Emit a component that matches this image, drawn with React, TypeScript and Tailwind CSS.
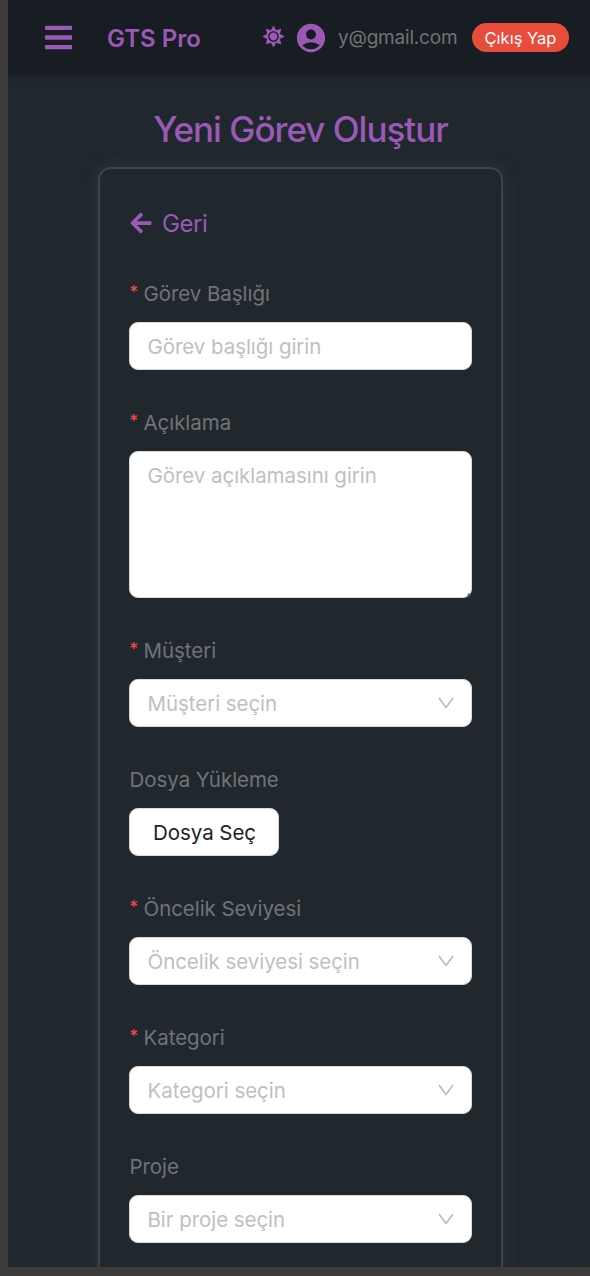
import type { ReactNode } from "react";
import { FaArrowLeft, FaBars, FaSun } from "react-icons/fa";
import { MdAccountCircle } from "react-icons/md";

function Field({ label, required, children }: { label: string; required?: boolean; children: ReactNode }) {
  return (
    <div className="mb-9">
      <div className="mb-3 flex h-[33px] items-center pt-[2px] pl-[0.5px] text-[20.5px] font-[370] tracking-[-0.05px] text-[#717375]">
        {required && <span className="mr-[7px] mb-[5px] w-[7px] text-[17px] leading-none text-[#ff4d4f]">*</span>}
        <span>{label}</span>
      </div>
      {children}
    </div>
  );
}

const box = "w-full rounded-[9px] border-[1.5px] border-[#d9d9d9] bg-white text-[20.5px] font-[370] tracking-[-0.05px]";

function Select({ placeholder }: { placeholder: string }) {
  return (
    <button className={`${box} flex h-12 items-center justify-between pt-[2px] pr-[17px] pl-[17.5px] text-[#bfbfbf]`}>
      <span>{placeholder}</span>
      <svg viewBox="0 0 16 12" className="mb-[3px] h-3 w-4" fill="none" stroke="#b8b8b8" strokeWidth="1.5">
        <path d="M1 1 L8 10.5 L15 1" />
      </svg>
    </button>
  );
}

export default function App() {
  return (
    <div className="h-[1276px] w-[590px] overflow-hidden bg-[#3c3b3a] pb-[9px] pl-2 font-['Inter','Liberation_Sans',sans-serif]">
      <div className="flex h-full flex-col overflow-hidden bg-[#20282e]">
        <header className="relative flex h-[75px] shrink-0 items-center bg-[#171d22] pl-[35px] shadow-[0_2px_8px_rgba(0,0,0,0.18)]">
          <FaBars className="size-[31px] shrink-0 text-[#9b59b6]" />
          <span className="ml-[33px] w-[156px] pt-[2px] text-[24px] font-semibold whitespace-nowrap text-[#9b59b6]">GTS Pro</span>
          <FaSun className="mb-[2px] size-[21px] shrink-0 text-[#9b59b6]" />
          <MdAccountCircle className="ml-[10px] size-[34px] shrink-0 text-[#9b59b6]" />
          <span className="ml-[10px] w-[134px] pt-px text-[19px] font-[370] tracking-[-0.2px] whitespace-nowrap text-[#717375]">y@gmail.com</span>
          <button className="h-[29px] w-[97px] rounded-full bg-[#e74c3c] pt-px text-[16.5px] whitespace-nowrap text-white">Çıkış Yap</button>
        </header>
        <h1 className="mt-[30px] ml-[3px] h-12 shrink-0 text-center text-[35px] leading-[48px] font-medium tracking-[-1px] text-[#9b59b6]">
          Yeni Görev Oluştur
        </h1>
        <main className="mt-[14px] ml-[90px] h-[1300px] w-[405px] shrink-0 rounded-[13px] border-2 border-[#434343] px-[29px] pt-[36px] shadow-[0_0_15px_rgba(65,75,85,0.45)]">
          <a className="mb-[35px] flex h-[37px] items-center text-[24px] font-[370] text-[#9b59b6]">
            <FaArrowLeft className="mr-[9px] mb-px size-6" />
            <span className="pt-px tracking-[-0.4px]">Geri</span>
          </a>
          <Field label="Görev Başlığı" required>
            <input className={`${box} block h-12 px-[17.5px] pt-px placeholder:text-[#bfbfbf]`} placeholder="Görev başlığı girin" />
          </Field>
          <Field label="Açıklama" required>
            <textarea className={`${box} block h-[147px] resize-none px-[17.5px] pt-[7px] leading-[33px] placeholder:text-[#bfbfbf]`} placeholder="Görev açıklamasını girin" />
            <div className="relative">
              <svg viewBox="0 0 4 4" className="absolute right-px bottom-px size-1" fill="none" stroke="#50575c">
                <path d="M0 2H4M2 0V4" />
              </svg>
            </div>
          </Field>
          <Field label="Müşteri" required>
            <Select placeholder="Müşteri seçin" />
          </Field>
          <Field label="Dosya Yükleme">
            <button className="block h-12 w-[150px] rounded-[9px] border-[1.5px] border-[#d9d9d9] bg-white pt-[2px] pl-px text-[20.5px] font-[370] tracking-[-0.05px] text-[#222222]">Dosya Seç</button>
          </Field>
          <Field label="Öncelik Seviyesi" required>
            <Select placeholder="Öncelik seviyesi seçin" />
          </Field>
          <Field label="Kategori" required>
            <Select placeholder="Kategori seçin" />
          </Field>
          <Field label="Proje">
            <Select placeholder="Bir proje seçin" />
          </Field>
        </main>
      </div>
    </div>
  );
}
